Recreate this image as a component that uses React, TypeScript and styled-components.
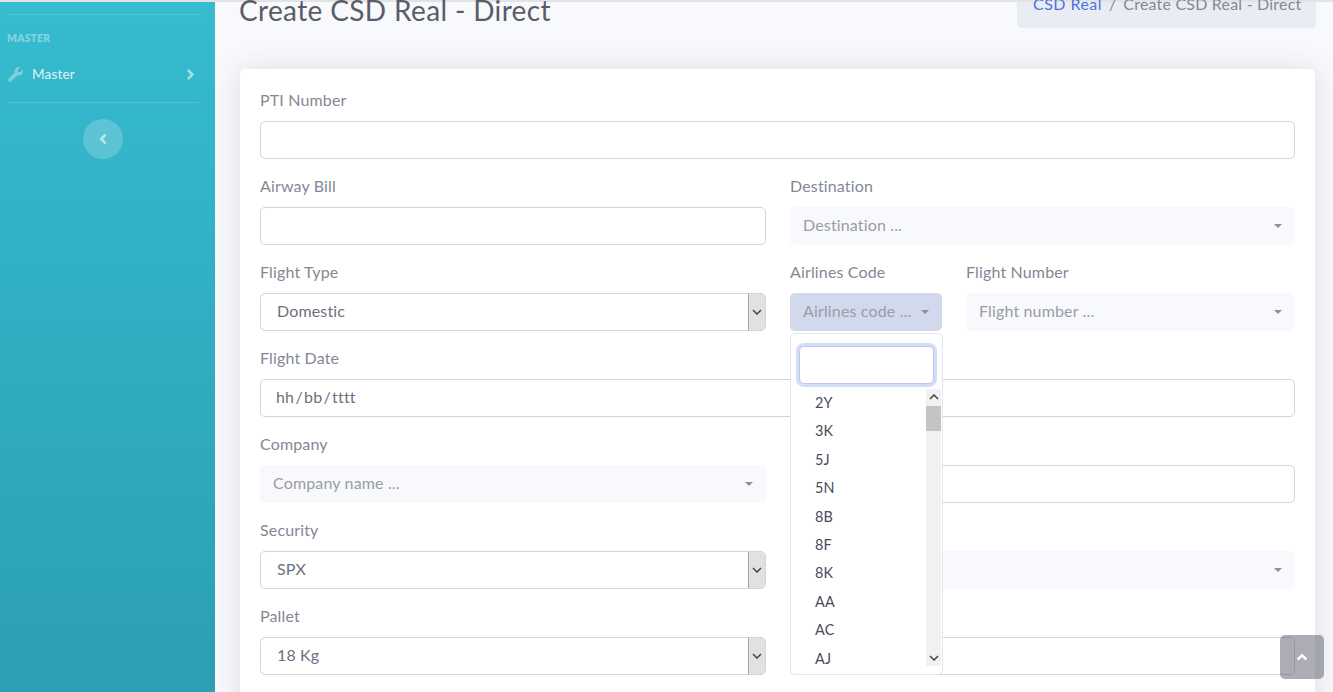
import React from 'react'
import styled, { createGlobalStyle } from 'styled-components'
import { FaAngleLeft, FaAngleRight, FaAngleUp, FaWrench } from 'react-icons/fa'

const airlineCodes = ['2Y', '3K', '5J', '5N', '8B', '8F', '8K', 'AA', 'AC', 'AJ']

const Chevron: React.FC<{ up?: boolean }> = ({ up }) => (
  <svg width="10" height="6" viewBox="0 0 10 6" fill="none">
    <polyline
      points={up ? '1,5 5,1 9,5' : '1,1 5,5 9,1'}
      stroke="#444"
      strokeWidth="1.5"
    />
  </svg>
)

const App: React.FC = () => {
  return (
    <Page>
      <GlobalStyle />
      <TopLine />
      <Layout>
        <Sidebar>
          <SideDivider />
          <SideHeading>MASTER</SideHeading>
          <NavItem>
            <NavIcon><FaWrench size={15} /></NavIcon>
            <NavLabel>Master</NavLabel>
            <NavArrow><FaAngleRight size={17} /></NavArrow>
          </NavItem>
          <SideDivider />
          <ToggleButton><FaAngleLeft size={16} /></ToggleButton>
        </Sidebar>
        <Main>
          <TitleRow>
            <Title>Create CSD Real - Direct</Title>
            <Breadcrumb>
              <a>CSD Real</a>
              <Separator>/</Separator>
              <span>Create CSD Real - Direct</span>
            </Breadcrumb>
          </TitleRow>
          <Card>
            <Field>
              <Label>PTI Number</Label>
              <Input />
            </Field>
            <TwoColumns>
              <Field>
                <Label>Airway Bill</Label>
                <Input />
              </Field>
              <Field>
                <Label>Destination</Label>
                <Picker><span>Destination ...</span><Caret /></Picker>
              </Field>
            </TwoColumns>
            <TwoColumns>
              <Field>
                <Label>Flight Type</Label>
                <NativeSelect>
                  <span>Domestic</span>
                  <SelectArrow><Chevron /></SelectArrow>
                </NativeSelect>
              </Field>
              <SplitFields>
                <Field>
                  <Label>Airlines Code</Label>
                  <DropdownAnchor>
                    <Picker $open><span>Airlines code ...</span><Caret /></Picker>
                    <Dropdown>
                      <SearchBox />
                      <ListArea>
                        <OptionList>
                          {airlineCodes.map(code => (
                            <Option key={code}>{code}</Option>
                          ))}
                        </OptionList>
                        <ScrollTrack>
                          <ScrollArrow><Chevron up /></ScrollArrow>
                          <ScrollThumb />
                          <ScrollArrow $bottom><Chevron /></ScrollArrow>
                        </ScrollTrack>
                      </ListArea>
                    </Dropdown>
                  </DropdownAnchor>
                </Field>
                <Field>
                  <Label>Flight Number</Label>
                  <Picker><span>Flight number ...</span><Caret /></Picker>
                </Field>
              </SplitFields>
            </TwoColumns>
            <Field>
              <Label>Flight Date</Label>
              <Input><DateText>hh / bb / tttt</DateText></Input>
            </Field>
            <TwoColumns>
              <Field>
                <Label>Company</Label>
                <Picker><span>Company name ...</span><Caret /></Picker>
              </Field>
              <Field>
                <Label>&nbsp;</Label>
                <Input />
              </Field>
            </TwoColumns>
            <TwoColumns>
              <Field>
                <Label>Security</Label>
                <NativeSelect>
                  <span>SPX</span>
                  <SelectArrow><Chevron /></SelectArrow>
                </NativeSelect>
              </Field>
              <Field>
                <Label>&nbsp;</Label>
                <Picker><span /><Caret /></Picker>
              </Field>
            </TwoColumns>
            <TwoColumns>
              <Field>
                <Label>Pallet</Label>
                <NativeSelect>
                  <span>18 Kg</span>
                  <SelectArrow><Chevron /></SelectArrow>
                </NativeSelect>
              </Field>
              <Field>
                <Label>&nbsp;</Label>
                <Input />
              </Field>
            </TwoColumns>
          </Card>
        </Main>
      </Layout>
      <BackToTop><FaAngleUp size={16} /></BackToTop>
    </Page>
  )
}

const GlobalStyle = createGlobalStyle`
  html, body {
    margin: 0;
    padding: 0;
    height: 100%;
    overflow: hidden;
  }
  * {
    box-sizing: border-box;
  }
  body {
    font-family: "Lato", "Liberation Sans", sans-serif;
    font-size: 16px;
    font-variant-ligatures: none;
    letter-spacing: 0.15px;
    color: #858796;
    background: #f8f9fc;
  }
`

const Page = styled.div`
  height: 692px;
  overflow: hidden;
  background: #f8f9fc;
`

const TopLine = styled.div`
  height: 2px;
  background: #e3e3e6;
`

const Layout = styled.div`
  display: flex;
  height: 690px;
`

const Sidebar = styled.aside`
  display: flex;
  flex-direction: column;
  width: 215px;
  flex: none;
  padding: 12px 16px 0 7px;
  background: linear-gradient(180deg, #36bbcf 0%, #2c9fb2 100%);
`

const SideDivider = styled.hr`
  width: 100%;
  margin: 0;
  border: 0;
  border-top: 1px solid rgba(255, 255, 255, 0.15);
`

const SideHeading = styled.div`
  margin-top: 17px;
  font-size: 10.4px;
  line-height: 13px;
  font-weight: 800;
  color: rgba(255, 255, 255, 0.4);
`

const NavItem = styled.div`
  display: flex;
  align-items: center;
  height: 40px;
  margin-top: 9px;
  margin-bottom: 8px;
  padding-left: 1px;
  color: rgba(255, 255, 255, 0.85);
`

const NavIcon = styled.span`
  display: flex;
  width: 24px;
  color: rgba(255, 255, 255, 0.35);
`

const NavLabel = styled.span`
  flex: 1;
  font-size: 13.6px;
  padding-bottom: 1px;
`

const NavArrow = styled.span`
  display: flex;
  color: rgba(255, 255, 255, 0.55);
`

const ToggleButton = styled.div`
  display: flex;
  align-items: center;
  justify-content: center;
  width: 40px;
  height: 40px;
  margin: 16px 0 0 76px;
  border-radius: 50%;
  background: rgba(255, 255, 255, 0.2);
  color: rgba(255, 255, 255, 0.6);
`

const Main = styled.main`
  flex: 1;
  min-width: 0;
  padding: 0 17px 0 25px;
`

const TitleRow = styled.div`
  display: flex;
  justify-content: space-between;
  align-items: flex-start;
  height: 67px;
`

const Title = styled.h1`
  margin: -9px 0 0 -1px;
  font-size: 28px;
  line-height: 34px;
  font-weight: 400;
  letter-spacing: 0.36px;
  color: #5a5c69;
`

const Breadcrumb = styled.nav`
  display: flex;
  align-items: flex-end;
  width: 299px;
  height: 26px;
  padding: 0 16px 15px;
  border-radius: 0 0 5px 5px;
  background: #eaecf4;
  line-height: 19px;
  white-space: nowrap;
  letter-spacing: 0.2px;
  a {
    letter-spacing: 0.45px;
    color: #4e73df;
  }
`

const Separator = styled.span`
  margin: 0 7px;
`

const Card = styled.section`
  display: flex;
  flex-direction: column;
  gap: 16px;
  height: 700px;
  margin-right: 1px;
  padding: 20px 20px 0;
  border-radius: 5px;
  background: #fff;
  box-shadow: 0 2px 28px rgba(58, 59, 69, 0.15);
`

const TwoColumns = styled.div`
  display: grid;
  grid-template-columns: 506px 505px;
  gap: 24px;
`

const SplitFields = styled.div`
  display: grid;
  grid-template-columns: 152px 329px;
  gap: 24px;
`

const Field = styled.div`
  display: flex;
  flex-direction: column;
  min-width: 0;
`

const Label = styled.label`
  height: 24px;
  margin-bottom: 8px;
  line-height: 22px;
  white-space: nowrap;
`

const Input = styled.div`
  display: flex;
  align-items: center;
  height: 38px;
  padding: 0 15px 3px;
  border: 1px solid #d1d3e2;
  border-radius: 5px;
  background: #fff;
  color: #6e707e;
`

const DateText = styled.span`
  word-spacing: -3px;
`

const Picker = styled.div<{ $open?: boolean }>`
  display: flex;
  align-items: center;
  justify-content: space-between;
  height: 38px;
  padding: 0 13px 3px;
  border-radius: 5px;
  background: ${p => (p.$open ? '#d3d9ec' : '#f8f9fc')};
  color: #9a9ca6;
  white-space: nowrap;
`

const Caret = styled.i`
  flex: none;
  width: 0;
  height: 0;
  margin: 3px 0 0 4px;
  border-top: 4px solid #8f9097;
  border-left: 4px solid transparent;
  border-right: 4px solid transparent;
`

const NativeSelect = styled.div`
  display: flex;
  align-items: center;
  justify-content: space-between;
  height: 38px;
  padding-left: 16px;
  border: 1px solid #d1d3e2;
  border-radius: 5px;
  background: #fff;
  color: #6e707e;
  overflow: hidden;
  span:first-child {
    padding-bottom: 3px;
  }
`

const SelectArrow = styled.span`
  display: flex;
  align-items: center;
  justify-content: center;
  width: 17px;
  height: 100%;
  border-left: 1px solid #a2a2a2;
  background: #e1e1e1;
`

const DropdownAnchor = styled.div`
  position: relative;
`

const Dropdown = styled.div`
  position: absolute;
  z-index: 5;
  top: 40px;
  left: 0;
  width: 153px;
  height: 342px;
  padding-top: 12px;
  border: 1px solid #e3e6f0;
  border-radius: 5px;
  background: #fff;
`

const SearchBox = styled.div`
  width: 135px;
  height: 38px;
  margin-left: 8px;
  border: 1px solid #bac8f3;
  border-radius: 5px;
  box-shadow: 0 0 0 3px #d3ddf8;
  background: #fff;
`

const ListArea = styled.div`
  display: flex;
  height: 277px;
  margin-top: 5px;
  overflow: hidden;
`

const OptionList = styled.div`
  flex: 1;
`

const Option = styled.div`
  height: 28.4px;
  padding-left: 24px;
  font-size: 14.4px;
  line-height: 28px;
  color: #4b4c57;
`

const ScrollTrack = styled.div`
  position: relative;
  width: 15px;
  margin-right: 1px;
  background: #f1f1f1;
`

const ScrollArrow = styled.div<{ $bottom?: boolean }>`
  position: absolute;
  left: 0;
  right: 0;
  ${p => (p.$bottom ? 'bottom: 0;' : 'top: 0;')}
  display: flex;
  align-items: center;
  justify-content: center;
  height: 16px;
`

const ScrollThumb = styled.div`
  position: absolute;
  top: 17px;
  left: 0;
  right: 0;
  height: 25px;
  background: #c4c4c4;
`

const BackToTop = styled.div`
  position: fixed;
  right: 9px;
  bottom: 13px;
  display: flex;
  align-items: center;
  justify-content: center;
  width: 44px;
  height: 44px;
  border-radius: 5px;
  background: rgba(90, 92, 105, 0.5);
  color: #fff;
`

export default App
